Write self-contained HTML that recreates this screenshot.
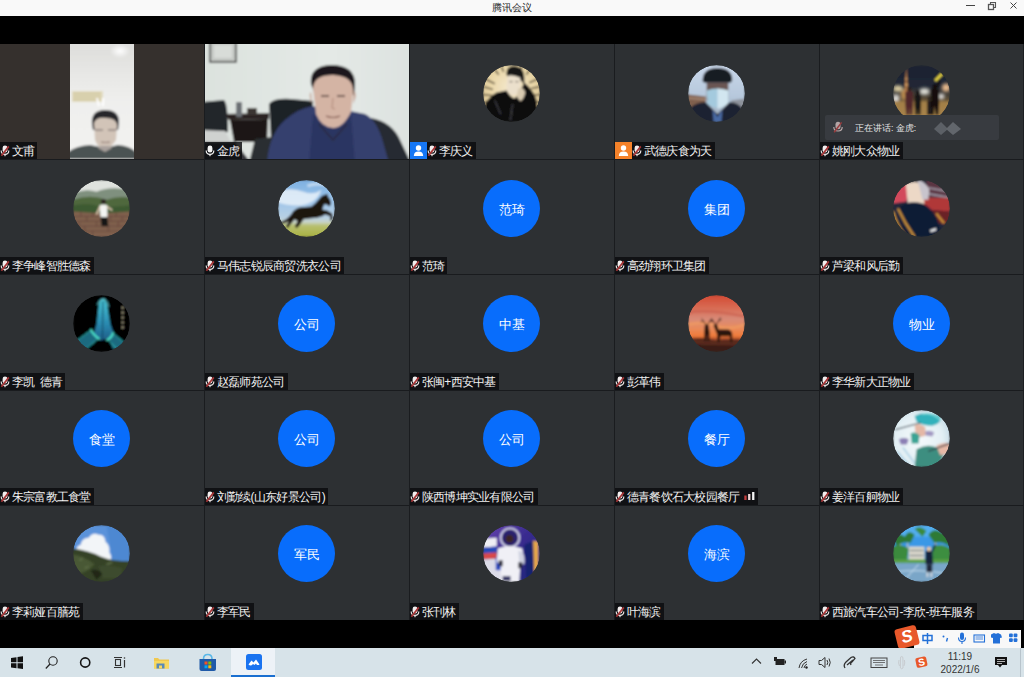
<!DOCTYPE html>
<html><head><meta charset="utf-8">
<style>
*{margin:0;padding:0;box-sizing:border-box}
html,body{width:1024px;height:677px;overflow:hidden;background:#000;font-family:"Liberation Sans",sans-serif}
#title{position:absolute;left:0;top:0;width:1024px;height:16px;background:#f9f9f9}
#title .t{position:absolute;left:0;width:1024px;top:1px;text-align:center;font-size:10px;line-height:13px;color:#2a2a2a}
#grid{position:absolute;left:0;top:44px;width:1024px;height:576px;background:#1a1c1f}
.cell{position:absolute;width:204px;height:115.2px;background:#2d3033;overflow:hidden}
.cell.brown{background:#35302d}
.av{position:absolute;left:73px;top:20.5px;width:57px;height:57px;border-radius:50%;overflow:hidden}
.av svg{display:block;width:57px;height:57px}
.av.blue{background:#086dfc;color:#fff;font-size:13px;text-align:center;line-height:59px}
.label{position:absolute;left:0;bottom:0;height:17px;background:rgba(10,11,13,0.82);color:#f0f0f0;font-size:12px;letter-spacing:-0.7px;line-height:17px;padding:0 3px 0 0;white-space:nowrap;display:flex;align-items:center}
.label .mic{margin-right:1.7px;flex:none;position:relative;top:0.5px}
.label .nm{position:relative;top:1px}
.badge{position:absolute;left:0;bottom:0;width:17px;height:17px}
.badge svg{display:block}
.vid1{position:absolute;left:70px;top:0;width:64px;height:115px;overflow:hidden}
.vid2{position:absolute;left:0;top:0;width:204px;height:115px;overflow:hidden}
#speak{position:absolute;left:825px;top:115px;width:174px;height:25px;background:#383b40;border-radius:2px}
#taskbar{position:absolute;left:0;top:648px;width:1024px;height:29px;background:#d7e3e9}
#speak .st{position:absolute;left:30px;top:0.5px;line-height:25px;font-size:8.6px;color:#e4e4e4;white-space:nowrap}
#ime{position:absolute;left:914px;top:630px;width:107px;height:18px;background:#f8f8f8}
#imelogo{position:absolute;left:-18px;top:-3px;width:22px;height:20px;background:#e8582a;transform:rotate(-14deg);border-radius:3px}
#imelogo span{position:absolute;left:0;top:0;width:22px;text-align:center;font-size:17px;font-weight:bold;color:#fff;line-height:20px;font-style:italic}
#active{position:absolute;left:231px;top:0;width:44px;height:29px;background:#edf2f7;border-bottom:2px solid #1a6fd0}
#clock{position:absolute;left:930px;top:2px;width:60px;text-align:center;font-size:10px;line-height:13px;color:#333}

</style></head><body>
<div id="title"><div class="t">腾讯会议</div>
<svg style="position:absolute;left:960px;top:0" width="64" height="16" viewBox="0 0 64 16">
<path d="M6 5.5 H15" stroke="#444" stroke-width="1"/>
<rect x="28.5" y="4.5" width="5" height="5" fill="none" stroke="#555" stroke-width="1.3"/>
<path d="M30.5 4.5 V2.5 H35.5 V7.5 H33.5" fill="none" stroke="#555" stroke-width="1.1"/>
<path d="M50.5 2.5 L56.5 8.5 M56.5 2.5 L50.5 8.5" stroke="#444" stroke-width="1"/>
</svg>
</div>
<div id="grid">
<div class="cell brown" style="left:0px;top:0.0px;"><div class="vid1"><svg width="64" height="115" viewBox="0 0 64 115">
<defs><linearGradient id="gv1" x1="0" y1="0" x2="0" y2="1"><stop offset="0" stop-color="#dcdcda"/><stop offset="0.3" stop-color="#e8e8e6"/><stop offset="0.5" stop-color="#efefed"/><stop offset="1" stop-color="#f3f3f1"/></linearGradient>
<radialGradient id="glamp" cx="0.5" cy="0.5" r="0.5"><stop offset="0" stop-color="#ffffff"/><stop offset="1" stop-color="#ffffff" stop-opacity="0"/></radialGradient>
<filter id="fv1"><feGaussianBlur stdDeviation="0.8"/></filter></defs>
<g filter="url(#fv1)">
<rect x="-4" y="-4" width="72" height="123" fill="url(#gv1)"/>
<ellipse cx="50" cy="7" rx="10" ry="7" fill="url(#glamp)"/>
<rect x="2" y="47" width="31" height="11" fill="#e2dcc0"/>
<path d="M3 49.5 H31 M3 52.5 H31 M3 55.5 H31" stroke="#c4b47a" stroke-width="1"/>
<path d="M27 54 L29 62 M33 54 L33 62" stroke="#ffffff" stroke-width="2"/>
<path d="M-2 115 L-2 108 Q6 102 20 101 L35 104 L48 101 Q60 102 66 108 L66 115 Z" fill="#4c5252"/>
<path d="M22 80 Q21 66 35 66 Q49 66 49 78 L48 86 L23 86 Z" fill="#26262c"/>
<path d="M24 79 Q26 73 36 74 Q47 74 47 82 L46 96 Q40 105 35 105 Q28 104 25 96 Z" fill="#d2c4b8"/>
<path d="M25 86 H33 M38 86 H46" stroke="#6a6060" stroke-width="1.2"/>
<path d="M31 98 Q35 99 40 98" stroke="#9a8078" stroke-width="1"/>
<path d="M28 104 L35 108 L42 104 L40 102 L30 102 Z" fill="#a8a09c"/>
</g>
</svg></div><div class="label"><svg class="mic" width="10" height="12" viewBox="0 0 10 12"><rect x="2.6" y="0.6" width="4.8" height="7" rx="2.4" fill="#f2eeee"/><path d="M1.2 5.6 Q1.2 9.4 5 9.4 Q8.8 9.4 8.8 5.6" stroke="#e9e4e4" stroke-width="1.2" fill="none"/><rect x="4.4" y="9.2" width="1.2" height="2" fill="#e9e4e4"/><path d="M8.8 1.4 L1.4 10.8" stroke="#a83436" stroke-width="1.7"/></svg><span class="nm">文甫</span></div></div>
<div class="cell" style="left:205px;top:0.0px;"><div class="vid2"><svg width="204" height="115" viewBox="0 0 204 115">
<defs><linearGradient id="gw" x1="0" y1="0" x2="1" y2="0"><stop offset="0" stop-color="#dce2de"/><stop offset="0.6" stop-color="#e4e9e6"/><stop offset="1" stop-color="#dde2e0"/></linearGradient>
<filter id="fv2"><feGaussianBlur stdDeviation="0.8"/></filter></defs>
<g filter="url(#fv2)">
<rect x="-4" y="-4" width="212" height="123" fill="url(#gw)"/>
<rect x="5" y="-2" width="26" height="20" fill="#c4c8c4" stroke="#2e2e2e" stroke-width="1.4"/>
<rect x="9" y="1" width="18" height="13" fill="#d8dcd8"/>
<path d="M-4 58 L19 56 Q23 60 23 88 L-4 90 Z" fill="#22262c"/>
<path d="M20 70 L64 69 L64 75 L24 76 Z" fill="#2a2420"/>
<path d="M25 76 L63 75 L62 98 L29 98 Z" fill="#1c1816"/>
<rect x="31" y="58" width="6" height="15" rx="1" fill="#6c7074"/>
<path d="M42 64 H52 V71 H42 Z" fill="#3a3430"/>
<path d="M-4 86 L20 87 L26 98 L-4 98 Z" fill="#cfd2d0"/>
<path d="M-4 98 L30 98 L46 119 L-4 119 Z" fill="#34363a"/>
<path d="M64 60 Q68 54 86 55 L108 57 L106 90 L66 96 Z" fill="#1e2226"/>
<path d="M50 95 L108 88 L100 119 L44 119 Z" fill="#2a2e32"/>
<path d="M166 74 Q188 78 196 98 L206 119 L166 119 Z" fill="#262a32"/>
<path d="M62 119 Q64 90 80 76 Q94 64 108 62 L118 66 L140 66 L160 70 Q172 76 178 98 L184 119 Z" fill="#353f6e"/>
<path d="M108 70 Q124 86 146 70 L150 119 L104 119 Z" fill="#2c3562"/>
<path d="M114 80 L128 96 L142 80" stroke="#2a2e4a" stroke-width="2" fill="none"/>
<path d="M106 40 Q104 22 126 21 Q150 21 150 40 L149 52 Q142 34 128 33 Q114 34 110 50 Z" fill="#1a181a"/>
<path d="M108 44 Q109 31 128 31 Q149 32 148 48 L146 68 Q138 84 128 84 Q116 83 111 70 Z" fill="#d4b4a4"/>
<path d="M116 52 H124 M132 52 H140" stroke="#54403a" stroke-width="1.5"/>
<path d="M128 54 L127 64 L130 65" stroke="#b08878" stroke-width="1" fill="none"/>
<path d="M121 72 Q128 75 135 72" stroke="#7a5048" stroke-width="1.2" fill="none"/>
<path d="M106 48 Q103 50 107 60 Z M149 46 Q153 50 148 60 Z" fill="#c8a494"/>
</g>
</svg></div><div class="label"><svg class="mic" width="10" height="12" viewBox="0 0 10 12"><rect x="2.6" y="0.6" width="4.8" height="7" rx="2.4" fill="#f4f4f4"/><path d="M1.2 5.6 Q1.2 9.4 5 9.4 Q8.8 9.4 8.8 5.6" stroke="#eeeeee" stroke-width="1.2" fill="none"/><rect x="4.4" y="9.2" width="1.2" height="2" fill="#eeeeee"/></svg><span class="nm">金虎</span></div></div>
<div class="cell" style="left:410px;top:0.0px;"><div class="av"><svg width="58" height="58" viewBox="0 0 58 58"><defs><clipPath id="cli"><circle cx="29" cy="29" r="29"/></clipPath><filter id="fli" x="-10%" y="-10%" width="120%" height="120%"><feGaussianBlur stdDeviation="1"/></filter></defs><g clip-path="url(#cli)"><g filter="url(#fli)">
<defs><radialGradient id="gli" cx="0.5" cy="0.4" r="0.6"><stop offset="0" stop-color="#f6ead0"/><stop offset="0.6" stop-color="#ead8aa"/><stop offset="1" stop-color="#d8c290"/></radialGradient></defs>
<rect width="58" height="58" fill="url(#gli)"/>
<g stroke="#3a3020" stroke-width="1.6" opacity="0.75">
<path d="M2 14 L12 19 M0 22 L10 25 M0 30 L9 31 M1 38 L9 37 M10 2 L16 10 M18 0 L21 7 M40 0 L38 6 M48 4 L44 10 M56 14 L47 18 M58 22 L49 24 M58 30 L49 31 M58 38 L50 37 M56 46 L50 43"/>
</g>
<path d="M24 10 Q23 1 32 1 Q42 2 42 12 L42 20 L39 16 L26 13 Z" fill="#121212"/>
<path d="M25 11 Q30 9 38 13 L38 24 Q35 31 30 31 Q25 29 24 22 Z" fill="#ebe0cc"/>
<path d="M27 17 H30 M33 17 H36" stroke="#5a5048" stroke-width="0.9"/>
<path d="M0 58 L2 40 Q6 32 14 28 L24 26 Q28 33 32 34 L36 30 L42 18 Q50 24 54 34 L58 58 Z" fill="#0d0d10"/>
<path d="M36 24 Q41 22 43 28 Q42 34 38 37 L34 32 Z" fill="#d8cab0"/>
<path d="M12 36 L18 50 M30 40 L28 56" stroke="#6a6a70" stroke-width="1" opacity="0.7"/>
</g></g></svg></div><div class="badge" style="background:#1677f5"><svg width="17" height="17" viewBox="0 0 17 17"><circle cx="8.5" cy="6" r="2.7" fill="#fff"/><path d="M3.8 14 Q4 9.6 8.5 9.6 Q13 9.6 13.2 14 Z" fill="#fff"/></svg></div><div class="label" style="left:17px"><svg class="mic" width="10" height="12" viewBox="0 0 10 12"><rect x="2.6" y="0.6" width="4.8" height="7" rx="2.4" fill="#f2eeee"/><path d="M1.2 5.6 Q1.2 9.4 5 9.4 Q8.8 9.4 8.8 5.6" stroke="#e9e4e4" stroke-width="1.2" fill="none"/><rect x="4.4" y="9.2" width="1.2" height="2" fill="#e9e4e4"/><path d="M8.8 1.4 L1.4 10.8" stroke="#a83436" stroke-width="1.7"/></svg><span class="nm">李庆义</span></div></div>
<div class="cell" style="left:615px;top:0.0px;"><div class="av"><svg width="58" height="58" viewBox="0 0 58 58"><defs><clipPath id="cmask"><circle cx="29" cy="29" r="29"/></clipPath><filter id="fmask" x="-10%" y="-10%" width="120%" height="120%"><feGaussianBlur stdDeviation="1"/></filter></defs><g clip-path="url(#cmask)"><g filter="url(#fmask)">
<defs><linearGradient id="gmask" x1="0" y1="0" x2="0" y2="1"><stop offset="0" stop-color="#cad8ea"/><stop offset="0.55" stop-color="#b6c8dc"/><stop offset="1" stop-color="#9aa8b8"/></linearGradient></defs>
<rect width="58" height="58" fill="url(#gmask)"/>
<path d="M0 30 L18 32 L18 46 L0 46 Z" fill="#80604e"/>
<path d="M0 33.5 L18 35" stroke="#a88a78" stroke-width="1.6"/>
<path d="M44 36 L58 34 L58 44 L44 44 Z" fill="#8e939c"/>
<path d="M15 14 Q16 3 30 3 Q44 3 45 14 Q45 18 42 18 L18 18 Q14 18 15 14 Z" fill="#171a24"/>
<path d="M19 18 L41 18 L41 36 Q30 44 19 36 Z" fill="#6a5652"/>
<path d="M19 26 Q30 22 41 26 L41 40 Q30 47 20 40 Z" fill="#a4cade"/>
<path d="M30 24 L41 26 L41 40 L30 45 Z" fill="#d2e6f0"/>
<path d="M0 58 L2 44 Q8 38 18 38 L30 50 L42 38 Q52 38 56 46 L58 58 Z" fill="#1e2230"/>
<path d="M25 45 L30 53 L35 45 L34 58 L26 58 Z" fill="#4a6aa4"/>
</g></g></svg></div><div class="badge" style="background:#f5822a"><svg width="17" height="17" viewBox="0 0 17 17"><circle cx="8.5" cy="6" r="2.7" fill="#fff"/><path d="M3.8 14 Q4 9.6 8.5 9.6 Q13 9.6 13.2 14 Z" fill="#fff"/></svg></div><div class="label" style="left:17px"><svg class="mic" width="10" height="12" viewBox="0 0 10 12"><rect x="2.6" y="0.6" width="4.8" height="7" rx="2.4" fill="#f2eeee"/><path d="M1.2 5.6 Q1.2 9.4 5 9.4 Q8.8 9.4 8.8 5.6" stroke="#e9e4e4" stroke-width="1.2" fill="none"/><rect x="4.4" y="9.2" width="1.2" height="2" fill="#e9e4e4"/><path d="M8.8 1.4 L1.4 10.8" stroke="#a83436" stroke-width="1.7"/></svg><span class="nm">武德庆食为天</span></div></div>
<div class="cell" style="left:820px;top:0.0px;"><div class="av"><svg width="58" height="58" viewBox="0 0 58 58"><defs><clipPath id="cnight"><circle cx="29" cy="29" r="29"/></clipPath><filter id="fnight" x="-10%" y="-10%" width="120%" height="120%"><feGaussianBlur stdDeviation="1"/></filter></defs><g clip-path="url(#cnight)"><g filter="url(#fnight)">
<defs><linearGradient id="gn" x1="0" y1="0" x2="0" y2="1"><stop offset="0" stop-color="#1a2030"/><stop offset="0.38" stop-color="#222836"/><stop offset="0.55" stop-color="#4a4234"/><stop offset="0.7" stop-color="#8a6a3a"/><stop offset="1" stop-color="#b08848"/></linearGradient>
<filter id="nbl" x="-50%" y="-50%" width="200%" height="200%"><feGaussianBlur stdDeviation="1.4"/></filter></defs>
<rect width="58" height="58" fill="url(#gn)"/>
<g filter="url(#nbl)">
<ellipse cx="5" cy="24" rx="5" ry="3" fill="#e8d8a8"/>
<ellipse cx="3" cy="34" rx="3" ry="4" fill="#e8e8e8"/>
<ellipse cx="32" cy="27" rx="5" ry="3" fill="#e8e8e0"/>
<ellipse cx="54" cy="23" rx="4" ry="4" fill="#f0c090"/>
<ellipse cx="49" cy="32" rx="3" ry="2.5" fill="#f4f4f4"/>
<ellipse cx="13" cy="30" rx="5" ry="6" fill="#c09050"/>
</g>
<path d="M11.5 30 L12.8 10 L13.5 1 L14.2 10 L15.5 30 Z" fill="#b07848"/>
<path d="M12.3 14 L14.7 14 M12 20 L15 20" stroke="#e8b070" stroke-width="1.2"/>
<path d="M42 15 L49 8 L51 10 L44 17 Z" fill="#e6d440"/>
<rect x="0" y="37" width="58" height="21" fill="#a8844a" opacity="0.85"/>
<path d="M12.5 28 Q16.5 24 20.5 28 L20.5 40 L19.5 51 L17 51 L16.5 42 L16 51 L13.5 51 L12.5 40 Z" fill="#50282a"/>
<circle cx="16.5" cy="24.5" r="2.2" fill="#2a1a18"/>
<path d="M22 31 Q25.3 28 28.5 31 L28.5 41 L27.8 51 L25.8 51 L25.3 43 L24.8 51 L22.8 51 L22 41 Z" fill="#141212"/>
<circle cx="25.3" cy="28" r="2.2" fill="#141212"/>
<path d="M34.7 37 Q36.8 34.5 39 37 L39 51 L34.7 51 Z" fill="#201a1a"/>
<circle cx="36.8" cy="34" r="1.6" fill="#201a1a"/>
<path d="M38.5 25 Q42.5 21.5 46.5 25 L47 39 L46 51 L43.5 51 L42.5 41 L41.5 51 L39 51 L38.5 39 Z" fill="#121010"/>
<circle cx="42.5" cy="21.5" r="2.3" fill="#121010"/>
<path d="M45 23 L47.5 15" stroke="#121010" stroke-width="2.2"/>
</g></g></svg></div><div class="label"><svg class="mic" width="10" height="12" viewBox="0 0 10 12"><rect x="2.6" y="0.6" width="4.8" height="7" rx="2.4" fill="#f2eeee"/><path d="M1.2 5.6 Q1.2 9.4 5 9.4 Q8.8 9.4 8.8 5.6" stroke="#e9e4e4" stroke-width="1.2" fill="none"/><rect x="4.4" y="9.2" width="1.2" height="2" fill="#e9e4e4"/><path d="M8.8 1.4 L1.4 10.8" stroke="#a83436" stroke-width="1.7"/></svg><span class="nm">姚刚大众物业</span></div></div>
<div class="cell" style="left:0px;top:115.2px;"><div class="av"><svg width="58" height="58" viewBox="0 0 58 58"><defs><clipPath id="cwall"><circle cx="29" cy="29" r="29"/></clipPath><filter id="fwall" x="-10%" y="-10%" width="120%" height="120%"><feGaussianBlur stdDeviation="1"/></filter></defs><g clip-path="url(#cwall)"><g filter="url(#fwall)">
<rect width="58" height="58" fill="#dfe2de"/>
<path d="M0 14 Q12 8 24 12 Q36 6 58 10 L58 30 L0 30 Z" fill="#7f907e"/>
<path d="M0 20 Q18 14 34 20 Q46 16 58 18 L58 34 L0 34 Z" fill="#50683e"/>
<path d="M0 26 Q16 22 30 28 L58 26 L58 34 L0 34 Z" fill="#3e5a30"/>
<path d="M0 32 L30 34 L58 32 L58 58 L0 58 Z" fill="#80604e"/>
<g stroke="#5c4034" stroke-width="0.8" opacity="0.85">
<path d="M0 37 H58 M0 42 H58 M0 47 H58 M0 52 H58"/>
<path d="M8 32 V37 M20 33 V37 M44 33 V37 M14 37 V42 M38 37 V42 M50 37 V42 M6 42 V47 M24 42 V47 M46 42 V47 M12 47 V52 M36 47 V52 M20 52 V58 M48 52 V58"/>
</g>
<circle cx="31" cy="22" r="2.6" fill="#2e2420"/>
<path d="M27 26 Q31 24 35 26 L35 38 L28 38 Z" fill="#f4f4f2"/>
<path d="M27.5 27 L24 35" stroke="#e8cdb8" stroke-width="1.6"/>
<path d="M34.5 27 L40 31" stroke="#e8cdb8" stroke-width="1.5"/>
<path d="M28 38 L35 38 L36 47 L29 47 Z" fill="#141414"/>
</g></g></svg></div><div class="label"><svg class="mic" width="10" height="12" viewBox="0 0 10 12"><rect x="2.6" y="0.6" width="4.8" height="7" rx="2.4" fill="#f2eeee"/><path d="M1.2 5.6 Q1.2 9.4 5 9.4 Q8.8 9.4 8.8 5.6" stroke="#e9e4e4" stroke-width="1.2" fill="none"/><rect x="4.4" y="9.2" width="1.2" height="2" fill="#e9e4e4"/><path d="M8.8 1.4 L1.4 10.8" stroke="#a83436" stroke-width="1.7"/></svg><span class="nm">李争峰智胜德森</span></div></div>
<div class="cell" style="left:205px;top:115.2px;"><div class="av"><svg width="58" height="58" viewBox="0 0 58 58"><defs><clipPath id="chorse"><circle cx="29" cy="29" r="29"/></clipPath><filter id="fhorse" x="-10%" y="-10%" width="120%" height="120%"><feGaussianBlur stdDeviation="1"/></filter></defs><g clip-path="url(#chorse)"><g filter="url(#fhorse)">
<defs><linearGradient id="gh" x1="0" y1="0" x2="0" y2="1"><stop offset="0" stop-color="#7eb0e0"/><stop offset="0.35" stop-color="#9cc4ea"/><stop offset="0.66" stop-color="#b8d0e4"/><stop offset="0.74" stop-color="#c8d4c8"/><stop offset="0.8" stop-color="#b8c070"/><stop offset="1" stop-color="#a8b040"/></linearGradient></defs>
<rect width="58" height="58" fill="url(#gh)"/>
<path d="M-2 14 Q10 6 26 12 Q36 16 44 10 Q40 24 22 26 Q6 26 -2 22 Z" fill="#eef4fa" opacity="0.8"/>
<path d="M30 6 Q40 2 52 6" stroke="#e8f0f8" stroke-width="3" opacity="0.6" fill="none"/>
<path d="M2 43 Q10 40 14 34 Q16 30 22 28 L34 27 Q38 24 42 19 Q45 15 48 15 L50 14 L51 17 Q54 20 54 25 L52 27 Q49 24 47 25 L45 30 L50 31 L55 34 L56 40 L53 42 L53 37 L48 35 L45 37 Q40 39 34 39 L26 40 L22 46 L19 49 L17 47 L20 42 L17 40 L12 46 L10 49 L8 47 L11 42 Q8 44 2 45 Z" fill="#1c1210"/>
</g></g></svg></div><div class="label"><svg class="mic" width="10" height="12" viewBox="0 0 10 12"><rect x="2.6" y="0.6" width="4.8" height="7" rx="2.4" fill="#f2eeee"/><path d="M1.2 5.6 Q1.2 9.4 5 9.4 Q8.8 9.4 8.8 5.6" stroke="#e9e4e4" stroke-width="1.2" fill="none"/><rect x="4.4" y="9.2" width="1.2" height="2" fill="#e9e4e4"/><path d="M8.8 1.4 L1.4 10.8" stroke="#a83436" stroke-width="1.7"/></svg><span class="nm">马伟志锐辰商贸洗衣公司</span></div></div>
<div class="cell" style="left:410px;top:115.2px;"><div class="av blue"><span>范琦</span></div><div class="label"><svg class="mic" width="10" height="12" viewBox="0 0 10 12"><rect x="2.6" y="0.6" width="4.8" height="7" rx="2.4" fill="#f2eeee"/><path d="M1.2 5.6 Q1.2 9.4 5 9.4 Q8.8 9.4 8.8 5.6" stroke="#e9e4e4" stroke-width="1.2" fill="none"/><rect x="4.4" y="9.2" width="1.2" height="2" fill="#e9e4e4"/><path d="M8.8 1.4 L1.4 10.8" stroke="#a83436" stroke-width="1.7"/></svg><span class="nm">范琦</span></div></div>
<div class="cell" style="left:615px;top:115.2px;"><div class="av blue"><span>集团</span></div><div class="label"><svg class="mic" width="10" height="12" viewBox="0 0 10 12"><rect x="2.6" y="0.6" width="4.8" height="7" rx="2.4" fill="#f2eeee"/><path d="M1.2 5.6 Q1.2 9.4 5 9.4 Q8.8 9.4 8.8 5.6" stroke="#e9e4e4" stroke-width="1.2" fill="none"/><rect x="4.4" y="9.2" width="1.2" height="2" fill="#e9e4e4"/><path d="M8.8 1.4 L1.4 10.8" stroke="#a83436" stroke-width="1.7"/></svg><span class="nm">高劲翔环卫集团</span></div></div>
<div class="cell" style="left:820px;top:115.2px;"><div class="av"><svg width="58" height="58" viewBox="0 0 58 58"><defs><clipPath id="ccar"><circle cx="29" cy="29" r="29"/></clipPath><filter id="fcar" x="-10%" y="-10%" width="120%" height="120%"><feGaussianBlur stdDeviation="1"/></filter></defs><g clip-path="url(#ccar)"><g filter="url(#fcar)">
<rect width="58" height="58" fill="#24283a"/>
<path d="M0 2 L16 2 L14 22 L0 24 Z" fill="#d24a5c"/>
<path d="M34 0 L58 0 L58 20 L34 20 Z" fill="#5a3442"/>
<path d="M36 8 L58 12 M36 14 L58 18" stroke="#a8a8b4" stroke-width="2" opacity="0.8"/>
<path d="M30 18 L58 18 L58 32 L30 30 Z" fill="#b03838"/>
<path d="M34 30 L58 32 L58 46 L36 42 Z" fill="#6a2428"/>
<path d="M13 4 Q22 0 30 4 L32 24 Q24 30 15 24 Z" fill="#ecd8c6"/>
<path d="M25 0 Q34 2 37 10 L36 20 L30 20 Z" fill="#c8c4cc"/>
<path d="M6 28 Q16 20 30 24 Q44 30 48 50 L44 58 L12 58 Z" fill="#101a34"/>
<path d="M0 32 Q4 46 12 56 M5 29 Q12 44 22 58 M44 34 L52 44" stroke="#cc9238" stroke-width="2.2"/>
<path d="M38 52 L44 50" stroke="#f0f0f0" stroke-width="2.2"/>
</g></g></svg></div><div class="label"><svg class="mic" width="10" height="12" viewBox="0 0 10 12"><rect x="2.6" y="0.6" width="4.8" height="7" rx="2.4" fill="#f2eeee"/><path d="M1.2 5.6 Q1.2 9.4 5 9.4 Q8.8 9.4 8.8 5.6" stroke="#e9e4e4" stroke-width="1.2" fill="none"/><rect x="4.4" y="9.2" width="1.2" height="2" fill="#e9e4e4"/><path d="M8.8 1.4 L1.4 10.8" stroke="#a83436" stroke-width="1.7"/></svg><span class="nm">芦梁和风后勤</span></div></div>
<div class="cell" style="left:0px;top:230.4px;"><div class="av"><svg width="58" height="58" viewBox="0 0 58 58"><defs><clipPath id="chands"><circle cx="29" cy="29" r="29"/></clipPath><filter id="fhands" x="-10%" y="-10%" width="120%" height="120%"><feGaussianBlur stdDeviation="1"/></filter></defs><g clip-path="url(#chands)"><g filter="url(#fhands)">
<rect width="58" height="58" fill="#030506"/>
<defs><linearGradient id="ghd" x1="0" y1="0" x2="0" y2="1"><stop offset="0" stop-color="#48c8d8"/><stop offset="0.6" stop-color="#2a8ab0"/><stop offset="1" stop-color="#1e5e88"/></linearGradient></defs>
<path d="M2 48 L18 36 L24 40 L26 44 L12 56 L6 58 Z" fill="#1a6a80"/>
<path d="M2 48 L18 36 M12 56 L26 44" stroke="#3ad0c8" stroke-width="1" opacity="0.8"/>
<path d="M36 42 L42 40 L54 50 L48 58 L40 54 Z" fill="#1a6a80"/>
<path d="M42 40 L54 50 M36 46 L46 56" stroke="#3ad0c8" stroke-width="1" opacity="0.8"/>
<path d="M30.5 4 Q34 5 35 12 L38 30 L41 38 L36 44 L28 46 L21 40 L24 30 L26 12 Q27 5 30.5 4 Z" fill="url(#ghd)"/>
<path d="M30.5 6 L30 44" stroke="#0e3a54" stroke-width="0.9"/>
<path d="M25 10 Q27 4 31 4 Q35 5 36 12" stroke="#70e4f0" stroke-width="1" fill="none"/>
<path d="M18 35 Q21 41 27 45" stroke="#50e8d0" stroke-width="2" fill="none"/>
<path d="M41 38 Q39 44 34 46" stroke="#50e8d0" stroke-width="2" fill="none"/>
<g fill="#c0b898"><circle cx="50.5" cy="13" r="1.1"/><circle cx="50.5" cy="18" r="1.1"/><circle cx="50.5" cy="23" r="1.1"/><circle cx="50.5" cy="28" r="1.1"/><circle cx="50.5" cy="33" r="1.1"/></g>
</g></g></svg></div><div class="label"><svg class="mic" width="10" height="12" viewBox="0 0 10 12"><rect x="2.6" y="0.6" width="4.8" height="7" rx="2.4" fill="#f2eeee"/><path d="M1.2 5.6 Q1.2 9.4 5 9.4 Q8.8 9.4 8.8 5.6" stroke="#e9e4e4" stroke-width="1.2" fill="none"/><rect x="4.4" y="9.2" width="1.2" height="2" fill="#e9e4e4"/><path d="M8.8 1.4 L1.4 10.8" stroke="#a83436" stroke-width="1.7"/></svg><span class="nm">李凯&nbsp;&nbsp;德青</span></div></div>
<div class="cell" style="left:205px;top:230.4px;"><div class="av blue"><span>公司</span></div><div class="label"><svg class="mic" width="10" height="12" viewBox="0 0 10 12"><rect x="2.6" y="0.6" width="4.8" height="7" rx="2.4" fill="#f2eeee"/><path d="M1.2 5.6 Q1.2 9.4 5 9.4 Q8.8 9.4 8.8 5.6" stroke="#e9e4e4" stroke-width="1.2" fill="none"/><rect x="4.4" y="9.2" width="1.2" height="2" fill="#e9e4e4"/><path d="M8.8 1.4 L1.4 10.8" stroke="#a83436" stroke-width="1.7"/></svg><span class="nm">赵磊师苑公司</span></div></div>
<div class="cell" style="left:410px;top:230.4px;"><div class="av blue"><span>中基</span></div><div class="label"><svg class="mic" width="10" height="12" viewBox="0 0 10 12"><rect x="2.6" y="0.6" width="4.8" height="7" rx="2.4" fill="#f2eeee"/><path d="M1.2 5.6 Q1.2 9.4 5 9.4 Q8.8 9.4 8.8 5.6" stroke="#e9e4e4" stroke-width="1.2" fill="none"/><rect x="4.4" y="9.2" width="1.2" height="2" fill="#e9e4e4"/><path d="M8.8 1.4 L1.4 10.8" stroke="#a83436" stroke-width="1.7"/></svg><span class="nm">张闽+西安中基</span></div></div>
<div class="cell" style="left:615px;top:230.4px;"><div class="av"><svg width="58" height="58" viewBox="0 0 58 58"><defs><clipPath id="cdeer"><circle cx="29" cy="29" r="29"/></clipPath><filter id="fdeer" x="-10%" y="-10%" width="120%" height="120%"><feGaussianBlur stdDeviation="1"/></filter></defs><g clip-path="url(#cdeer)"><g filter="url(#fdeer)">
<defs><linearGradient id="gd" x1="0" y1="0" x2="0" y2="1"><stop offset="0" stop-color="#d24a34"/><stop offset="0.22" stop-color="#d86a52"/><stop offset="0.42" stop-color="#d88a78"/><stop offset="0.6" stop-color="#ea8a58"/><stop offset="0.72" stop-color="#f07a3a"/><stop offset="0.8" stop-color="#8a3a24"/><stop offset="1" stop-color="#4a2218"/></linearGradient></defs>
<rect width="58" height="58" fill="url(#gd)"/>
<path d="M0 30 Q16 26 30 32 Q44 36 58 30" stroke="#f4a060" stroke-width="3" opacity="0.6" fill="none"/>
<path d="M0 18 Q20 14 58 22" stroke="#c85848" stroke-width="2.5" opacity="0.6" fill="none"/>
<path d="M0 45 Q14 42 28 46 Q44 44 58 46 L58 58 L0 58 Z" fill="#5a2a1e"/>
<path d="M0 50 L58 52 L58 58 L0 58 Z" fill="#3a1c16"/>
<path d="M17 31 Q19 28 21 31 L22 38 L22 47 L20 47 L19.5 40 L18.5 47 L16.5 47 L16.5 38 Z" fill="#2c1410"/>
<path d="M14 24 L18 30 M15 27 L13 27 M24 24 L20 30 M23 27 L25 27" stroke="#2c1410" stroke-width="0.9"/>
<path d="M26 31 Q28 28 30 31 L31 35 L41 35 Q45 36 45 40 L45 48 L43 48 L42.5 42 L33 42 L32 48 L30 48 L29.5 40 Z" fill="#2c1410"/>
<path d="M24 24 L28 30 M33 23 L29 30 M25 27 L23 26 M32 26 L34 25" stroke="#2c1410" stroke-width="0.9"/>
</g></g></svg></div><div class="label"><svg class="mic" width="10" height="12" viewBox="0 0 10 12"><rect x="2.6" y="0.6" width="4.8" height="7" rx="2.4" fill="#f2eeee"/><path d="M1.2 5.6 Q1.2 9.4 5 9.4 Q8.8 9.4 8.8 5.6" stroke="#e9e4e4" stroke-width="1.2" fill="none"/><rect x="4.4" y="9.2" width="1.2" height="2" fill="#e9e4e4"/><path d="M8.8 1.4 L1.4 10.8" stroke="#a83436" stroke-width="1.7"/></svg><span class="nm">彭革伟</span></div></div>
<div class="cell" style="left:820px;top:230.4px;"><div class="av blue"><span>物业</span></div><div class="label"><svg class="mic" width="10" height="12" viewBox="0 0 10 12"><rect x="2.6" y="0.6" width="4.8" height="7" rx="2.4" fill="#f2eeee"/><path d="M1.2 5.6 Q1.2 9.4 5 9.4 Q8.8 9.4 8.8 5.6" stroke="#e9e4e4" stroke-width="1.2" fill="none"/><rect x="4.4" y="9.2" width="1.2" height="2" fill="#e9e4e4"/><path d="M8.8 1.4 L1.4 10.8" stroke="#a83436" stroke-width="1.7"/></svg><span class="nm">李华新大正物业</span></div></div>
<div class="cell" style="left:0px;top:345.6px;"><div class="av blue"><span>食堂</span></div><div class="label"><svg class="mic" width="10" height="12" viewBox="0 0 10 12"><rect x="2.6" y="0.6" width="4.8" height="7" rx="2.4" fill="#f2eeee"/><path d="M1.2 5.6 Q1.2 9.4 5 9.4 Q8.8 9.4 8.8 5.6" stroke="#e9e4e4" stroke-width="1.2" fill="none"/><rect x="4.4" y="9.2" width="1.2" height="2" fill="#e9e4e4"/><path d="M8.8 1.4 L1.4 10.8" stroke="#a83436" stroke-width="1.7"/></svg><span class="nm">朱宗富教工食堂</span></div></div>
<div class="cell" style="left:205px;top:345.6px;"><div class="av blue"><span>公司</span></div><div class="label"><svg class="mic" width="10" height="12" viewBox="0 0 10 12"><rect x="2.6" y="0.6" width="4.8" height="7" rx="2.4" fill="#f2eeee"/><path d="M1.2 5.6 Q1.2 9.4 5 9.4 Q8.8 9.4 8.8 5.6" stroke="#e9e4e4" stroke-width="1.2" fill="none"/><rect x="4.4" y="9.2" width="1.2" height="2" fill="#e9e4e4"/><path d="M8.8 1.4 L1.4 10.8" stroke="#a83436" stroke-width="1.7"/></svg><span class="nm">刘勤续(山东好景公司)</span></div></div>
<div class="cell" style="left:410px;top:345.6px;"><div class="av blue"><span>公司</span></div><div class="label"><svg class="mic" width="10" height="12" viewBox="0 0 10 12"><rect x="2.6" y="0.6" width="4.8" height="7" rx="2.4" fill="#f2eeee"/><path d="M1.2 5.6 Q1.2 9.4 5 9.4 Q8.8 9.4 8.8 5.6" stroke="#e9e4e4" stroke-width="1.2" fill="none"/><rect x="4.4" y="9.2" width="1.2" height="2" fill="#e9e4e4"/><path d="M8.8 1.4 L1.4 10.8" stroke="#a83436" stroke-width="1.7"/></svg><span class="nm">陕西博坤实业有限公司</span></div></div>
<div class="cell" style="left:615px;top:345.6px;"><div class="av blue"><span>餐厅</span></div><div class="label"><svg class="mic" width="10" height="12" viewBox="0 0 10 12"><rect x="2.6" y="0.6" width="4.8" height="7" rx="2.4" fill="#f2eeee"/><path d="M1.2 5.6 Q1.2 9.4 5 9.4 Q8.8 9.4 8.8 5.6" stroke="#e9e4e4" stroke-width="1.2" fill="none"/><rect x="4.4" y="9.2" width="1.2" height="2" fill="#e9e4e4"/><path d="M8.8 1.4 L1.4 10.8" stroke="#a83436" stroke-width="1.7"/></svg><span class="nm">德青餐饮石大校园餐厅</span><svg width="11" height="10" viewBox="0 0 11 10" style="margin-left:4px;flex:none"><rect x="0.3" y="4.5" width="2.3" height="4.5" fill="#c03a3a"/><rect x="4.1" y="3" width="2.3" height="6" fill="#f0d8d8"/><rect x="8.1" y="1" width="2.3" height="8" fill="#f2f2f2"/></svg></div></div>
<div class="cell" style="left:820px;top:345.6px;"><div class="av"><svg width="58" height="58" viewBox="0 0 58 58"><defs><clipPath id="canime"><circle cx="29" cy="29" r="29"/></clipPath><filter id="fanime" x="-10%" y="-10%" width="120%" height="120%"><feGaussianBlur stdDeviation="1"/></filter></defs><g clip-path="url(#canime)"><g filter="url(#fanime)">
<defs><radialGradient id="gan" cx="0.45" cy="0.5" r="0.6"><stop offset="0" stop-color="#f6fafc"/><stop offset="0.7" stop-color="#e2eff4"/><stop offset="1" stop-color="#c0d6e2"/></radialGradient></defs>
<rect width="58" height="58" fill="url(#gan)"/>
<path d="M22 6 Q32 0 48 6 Q50 14 40 16 Q30 16 24 12 Z" fill="#30b2bc"/>
<path d="M30 4 Q40 2 48 10" stroke="#80dcdc" stroke-width="1.5" fill="none"/>
<path d="M2 20 L28 13" stroke="#34404c" stroke-width="1.1"/>
<path d="M6 30 Q11 27 16 30 L14 35 L8 35 Z" fill="#7a6aa8" opacity="0.85"/>
<path d="M32 22 Q38 20 42 23 L40 27 L33 26 Z" fill="#8a7ab0" opacity="0.75"/>
<path d="M22 15 Q29 13 33 18 L33 26 Q28 29 23 26 Z" fill="#e4b8a6"/>
<path d="M18 24 Q23 21 27 26 L26 34 L19 34 Z" fill="#3aa494"/>
<path d="M22 58 L24 40 Q34 34 44 38 L52 44 Q48 56 44 58 Z" fill="#3e8e80"/>
<path d="M44 36 Q52 32 58 34 L58 44 L48 46 Z" fill="#e6b8a6"/>
<path d="M36 42 L58 34" stroke="#2a303c" stroke-width="1.2"/>
<path d="M4 42 L16 56 M10 38 L22 54" stroke="#a4cce2" stroke-width="1.5"/>
</g></g></svg></div><div class="label"><svg class="mic" width="10" height="12" viewBox="0 0 10 12"><rect x="2.6" y="0.6" width="4.8" height="7" rx="2.4" fill="#f2eeee"/><path d="M1.2 5.6 Q1.2 9.4 5 9.4 Q8.8 9.4 8.8 5.6" stroke="#e9e4e4" stroke-width="1.2" fill="none"/><rect x="4.4" y="9.2" width="1.2" height="2" fill="#e9e4e4"/><path d="M8.8 1.4 L1.4 10.8" stroke="#a83436" stroke-width="1.7"/></svg><span class="nm">姜洋百舸物业</span></div></div>
<div class="cell" style="left:0px;top:460.8px;"><div class="av"><svg width="58" height="58" viewBox="0 0 58 58"><defs><clipPath id="csky"><circle cx="29" cy="29" r="29"/></clipPath><filter id="fsky" x="-10%" y="-10%" width="120%" height="120%"><feGaussianBlur stdDeviation="1"/></filter></defs><g clip-path="url(#csky)"><g filter="url(#fsky)">
<rect width="58" height="58" fill="#5a92da"/>
<path d="M34 0 L58 0 L58 40 L40 36 Z" fill="#4e88d2"/>
<path d="M3 28 Q3 21 8 20 Q9 13 16 13 Q20 7 26 10 Q32 9 33 17 Q38 21 37 28 Q40 32 38 36 L0 28 Z" fill="#f2f5f8"/>
<path d="M0 24 Q16 26 28 32 Q40 37 58 37 L58 58 L0 58 Z" fill="#364228"/>
<path d="M0 30 Q12 32 22 40 Q14 50 0 50 Z" fill="#485834"/>
<path d="M26 42 Q38 40 50 44 L48 54 L30 54 Z" fill="#3e4c2e"/>
<path d="M18 46 Q26 44 30 50 L24 56 Z" fill="#202818"/>
<path d="M6 36 L10 34 M34 40 L40 38 M12 44 L16 42" stroke="#5a6a44" stroke-width="2"/>
</g></g></svg></div><div class="label"><svg class="mic" width="10" height="12" viewBox="0 0 10 12"><rect x="2.6" y="0.6" width="4.8" height="7" rx="2.4" fill="#f2eeee"/><path d="M1.2 5.6 Q1.2 9.4 5 9.4 Q8.8 9.4 8.8 5.6" stroke="#e9e4e4" stroke-width="1.2" fill="none"/><rect x="4.4" y="9.2" width="1.2" height="2" fill="#e9e4e4"/><path d="M8.8 1.4 L1.4 10.8" stroke="#a83436" stroke-width="1.7"/></svg><span class="nm">李莉娅百膳苑</span></div></div>
<div class="cell" style="left:205px;top:460.8px;"><div class="av blue"><span>军民</span></div><div class="label"><svg class="mic" width="10" height="12" viewBox="0 0 10 12"><rect x="2.6" y="0.6" width="4.8" height="7" rx="2.4" fill="#f2eeee"/><path d="M1.2 5.6 Q1.2 9.4 5 9.4 Q8.8 9.4 8.8 5.6" stroke="#e9e4e4" stroke-width="1.2" fill="none"/><rect x="4.4" y="9.2" width="1.2" height="2" fill="#e9e4e4"/><path d="M8.8 1.4 L1.4 10.8" stroke="#a83436" stroke-width="1.7"/></svg><span class="nm">李军民</span></div></div>
<div class="cell" style="left:410px;top:460.8px;"><div class="av"><svg width="58" height="58" viewBox="0 0 58 58"><defs><clipPath id="castro"><circle cx="29" cy="29" r="29"/></clipPath><filter id="fastro" x="-10%" y="-10%" width="120%" height="120%"><feGaussianBlur stdDeviation="1"/></filter></defs><g clip-path="url(#castro)"><g filter="url(#fastro)">
<defs><linearGradient id="ga" x1="0" y1="0" x2="1" y2="1"><stop offset="0" stop-color="#6a44b0"/><stop offset="0.45" stop-color="#3a2c90"/><stop offset="1" stop-color="#1c2278"/></linearGradient></defs>
<rect width="58" height="58" fill="url(#ga)"/>
<path d="M0 14 L14 13 L14 22 L0 23 Z" fill="#eeeef4"/>
<path d="M0 23 L14 22 L14 28 L0 29 Z" fill="#2848b8"/>
<path d="M0 29 L14 28 L14 34 L0 35 Z" fill="#d84a4a"/>
<path d="M0 35 L18 34 L20 58 L0 58 Z" fill="#dcdce8"/>
<path d="M13 33 L20 33 L20 46 L13 46 Z" fill="#2a48c0"/>
<path d="M42 20 L52 16 L54 50 L44 54 Z" fill="#182070"/>
<path d="M51 16 L56 17 L56 46 L52 48 Z" fill="#e8a84a"/>
<circle cx="27.5" cy="13" r="9.5" fill="#2a2070" stroke="#dcdcf0" stroke-width="1.8"/>
<circle cx="27" cy="14" r="4" fill="#3a2828"/>
<path d="M15 24 Q27 19 40 24 L42 38 L38 40 L37 58 L18 58 L18 40 L14 38 Z" fill="#f0f0f6"/>
<path d="M36 26 Q44 28 42 40 L37 40 Z" fill="#cfd2e0"/>
<path d="M16 36 L20 36 L20 42 L16 42 Z" fill="#2a2a3a"/>
<path d="M36 38 L40 38 L40 44 L36 44 Z" fill="#2a2a3a"/>
<path d="M20 52 L28 52 L28 57 L20 57 Z" fill="#3a3a68"/>
</g></g></svg></div><div class="label"><svg class="mic" width="10" height="12" viewBox="0 0 10 12"><rect x="2.6" y="0.6" width="4.8" height="7" rx="2.4" fill="#f2eeee"/><path d="M1.2 5.6 Q1.2 9.4 5 9.4 Q8.8 9.4 8.8 5.6" stroke="#e9e4e4" stroke-width="1.2" fill="none"/><rect x="4.4" y="9.2" width="1.2" height="2" fill="#e9e4e4"/><path d="M8.8 1.4 L1.4 10.8" stroke="#a83436" stroke-width="1.7"/></svg><span class="nm">张刊林</span></div></div>
<div class="cell" style="left:615px;top:460.8px;"><div class="av blue"><span>海滨</span></div><div class="label"><svg class="mic" width="10" height="12" viewBox="0 0 10 12"><rect x="2.6" y="0.6" width="4.8" height="7" rx="2.4" fill="#f2eeee"/><path d="M1.2 5.6 Q1.2 9.4 5 9.4 Q8.8 9.4 8.8 5.6" stroke="#e9e4e4" stroke-width="1.2" fill="none"/><rect x="4.4" y="9.2" width="1.2" height="2" fill="#e9e4e4"/><path d="M8.8 1.4 L1.4 10.8" stroke="#a83436" stroke-width="1.7"/></svg><span class="nm">叶海滨</span></div></div>
<div class="cell" style="left:820px;top:460.8px;"><div class="av"><svg width="58" height="58" viewBox="0 0 58 58"><defs><clipPath id="cpalm"><circle cx="29" cy="29" r="29"/></clipPath><filter id="fpalm" x="-10%" y="-10%" width="120%" height="120%"><feGaussianBlur stdDeviation="1"/></filter></defs><g clip-path="url(#cpalm)"><g filter="url(#fpalm)">
<rect width="58" height="58" fill="#3a98e6"/>
<path d="M0 0 L58 0 L58 12 L0 12 Z" fill="#52aef0"/>
<path d="M6 40 L8 12 M14 40 L15 18 M44 40 L43 14 M52 40 L50 20" stroke="#c8c4b0" stroke-width="1.1"/>
<path d="M0 14 Q6 6 12 12 Q16 4 22 10 L18 18 Q10 16 4 22 Z" fill="#2e7a34"/>
<path d="M0 22 Q8 18 16 24 L14 38 L0 38 Z" fill="#3a8a3c"/>
<path d="M36 10 Q42 2 50 8 Q56 6 58 12 L58 22 Q50 16 42 18 Z" fill="#2e7a34"/>
<path d="M40 22 Q50 18 58 24 L58 38 L40 38 Z" fill="#3e8e40"/>
<path d="M22 4 Q28 0 34 6 L30 12 Z" fill="#3a8a3a"/>
<path d="M16 22 L32 22 L32 36 L16 36 Z" fill="#dcd8cc"/>
<path d="M17 26 H31 M17 31 H31" stroke="#8a9494" stroke-width="1.5"/>
<path d="M0 35 L58 35 L58 39 L0 39 Z" fill="#5aa046"/>
<path d="M0 39 L58 39 L58 58 L0 58 Z" fill="#7aa6c8"/>
<path d="M0 48 Q24 44 58 50 M10 58 L26 40" stroke="#c4dcee" stroke-width="1" fill="none"/>
<path d="M33 27 Q36.5 24 40 27 L41 40 L33 40 Z" fill="#18203a"/>
<path d="M34 40 L40 40 L40 48 L34 48 Z" fill="#22283a"/>
<path d="M35 48 L35 53 M39 48 L39 53" stroke="#e0e0e0" stroke-width="1.5"/>
<circle cx="36.5" cy="24.5" r="2.3" fill="#e8c8a0"/>
<path d="M40 27 L43 20" stroke="#18203a" stroke-width="1.6"/>
</g></g></svg></div><div class="label"><svg class="mic" width="10" height="12" viewBox="0 0 10 12"><rect x="2.6" y="0.6" width="4.8" height="7" rx="2.4" fill="#f2eeee"/><path d="M1.2 5.6 Q1.2 9.4 5 9.4 Q8.8 9.4 8.8 5.6" stroke="#e9e4e4" stroke-width="1.2" fill="none"/><rect x="4.4" y="9.2" width="1.2" height="2" fill="#e9e4e4"/><path d="M8.8 1.4 L1.4 10.8" stroke="#a83436" stroke-width="1.7"/></svg><span class="nm">西旅汽车公司-李欣-班车服务</span></div></div>
<div style="position:absolute;left:1023px;top:0;width:1px;height:576px;background:#1c1e21"></div><div style="position:absolute;left:0;top:115.2px;width:1024px;height:1px;background:#191b1e"></div><div style="position:absolute;left:0;top:230.4px;width:1024px;height:1px;background:#191b1e"></div><div style="position:absolute;left:0;top:345.6px;width:1024px;height:1px;background:#191b1e"></div><div style="position:absolute;left:0;top:460.8px;width:1024px;height:1px;background:#191b1e"></div>
</div>
<div id="speak">
<svg style="position:absolute;left:7px;top:6px" width="12" height="13" viewBox="0 0 12 13"><rect x="3.5" y="0.8" width="5" height="7.4" rx="2.5" fill="#c9b8b8" opacity="0.85"/><path d="M1.8 6 Q1.8 10 6 10 Q10.2 10 10.2 6" stroke="#bfaeae" stroke-width="1.1" fill="none"/><path d="M9.6 1.4 L2.2 11.2" stroke="#9a3a3c" stroke-width="1.5"/></svg>
<div class="st">正在讲话: 金虎:</div>
<svg style="position:absolute;left:106px;top:5px" width="34" height="16" viewBox="0 0 34 16"><g filter="url(#lb)"><path d="M10 2 L17 9 L10 15 L3 9 Z" fill="#5c6066"/><path d="M22 2 L30 9 L22 15 L15 9 Z" fill="#62666c"/></g><defs><filter id="lb"><feGaussianBlur stdDeviation="0.6"/></filter></defs></svg>
</div>
<div id="ime">
<div id="imelogo"><span>S</span></div>
<svg style="position:absolute;left:0;top:0" width="107" height="18" viewBox="0 0 107 18">
<g fill="none" stroke="#2370d8" stroke-width="1.5">
<rect x="9" y="5.5" width="9" height="5"/><path d="M13.5 3 V14"/>
</g>
<circle cx="29.5" cy="6.5" r="1" fill="#2370d8"/><path d="M33.5 8 L32.5 11.5" stroke="#2370d8" stroke-width="1.4"/>
<rect x="46" y="2.5" width="4" height="7.5" rx="2" fill="#2370d8"/><path d="M44.5 7.5 Q44.5 11.5 48 11.5 Q51.5 11.5 51.5 7.5 M48 11.5 V14" stroke="#2370d8" stroke-width="1.1" fill="none"/>
<rect x="60" y="5" width="10.5" height="7" fill="none" stroke="#2370d8" stroke-width="1.1"/><path d="M61.5 7 H69 M61.5 9 H69" stroke="#2370d8" stroke-width="0.8"/>
<path d="M77 4.5 L80 3 Q82 4.5 84 3 L87 4.5 L88 7.5 L86 8 L86 13.5 L79 13.5 L79 8 L77 7.5 Z" fill="#2370d8"/>
<rect x="95" y="3.5" width="3.8" height="3.8" rx="1" fill="#2370d8"/><rect x="99.6" y="3.5" width="3.8" height="3.8" rx="1" fill="#2370d8"/><rect x="95" y="8.3" width="3.8" height="3.8" rx="1" fill="#2370d8"/><rect x="99.6" y="8.3" width="3.8" height="3.8" rx="1" fill="#2370d8"/>
</svg>
</div>
<div id="taskbar">
<svg style="position:absolute;left:0;top:0" width="300" height="29" viewBox="0 0 300 29">
<path d="M11 10 L16.5 9.2 V14.2 H11 Z M17.5 9 L23 8.2 V14.2 H17.5 Z M11 15.2 H16.5 V20.2 L11 19.4 Z M17.5 15.2 H23 V21 L17.5 20.2 Z" fill="#111"/>
<circle cx="53" cy="13" r="4.2" fill="none" stroke="#222" stroke-width="1.1"/><path d="M50 16 L45.8 20.5" stroke="#222" stroke-width="1.2"/>
<circle cx="85.2" cy="14.5" r="4.6" fill="none" stroke="#151515" stroke-width="1.6"/>
<path d="M114 9.5 H122 M114 19.5 H122" stroke="#333" stroke-width="1.2"/><rect x="115.5" y="11.5" width="5" height="6" fill="none" stroke="#333" stroke-width="1.1"/><circle cx="124.5" cy="10" r="0.8" fill="#333"/><path d="M124.5 12 V19.5" stroke="#333" stroke-width="1.2"/>
<path d="M154 10 L158 10 L159.5 11.5 L169 11.5 L169 20.5 L154 20.5 Z" fill="#f0c850"/>
<path d="M154 13 L169 13 L169 20.5 L154 20.5 Z" fill="#f8d860"/>
<rect x="156.5" y="15.5" width="8" height="5" fill="#5a8ab8"/><rect x="159" y="17.5" width="3" height="3" fill="#f8d860"/>
<path d="M199.5 11 H216 V21 Q216 23 214 23 H201.5 Q199.5 23 199.5 21 Z" fill="#1f5aa8"/>
<path d="M203.5 11 Q203.5 6.5 207.8 6.5 Q212 6.5 212 11" stroke="#5ab8e8" stroke-width="1.6" fill="none"/>
<rect x="204.5" y="13.5" width="3" height="3" fill="#f35325"/><rect x="208.3" y="13.5" width="3" height="3" fill="#81bc06"/><rect x="204.5" y="17.3" width="3" height="3" fill="#05a6f0"/><rect x="208.3" y="17.3" width="3" height="3" fill="#ffba08"/>
</svg>
<div id="active"></div>
<svg style="position:absolute;left:246px;top:6px" width="16" height="16" viewBox="0 0 16 16"><rect width="16" height="16" rx="2.5" fill="#1a73f0"/><path d="M2.5 10.5 L5.5 6.5 L7.5 8.5 L10 5.5 L13.5 10.5 Q12 11.5 10.5 10.5 L10 9.5 L8.5 11 L7 10 Q6 11.5 4 11.5 Z" fill="#fff"/></svg>
<svg style="position:absolute;left:740px;top:0" width="160" height="29" viewBox="0 0 160 29">
<path d="M12 15.5 L16.5 11 L21 15.5" stroke="#333" stroke-width="1.1" fill="none"/>
<rect x="35.5" y="11" width="9" height="6" fill="#222"/><rect x="34" y="9" width="3" height="4" fill="#222"/><rect x="44.5" y="12.5" width="1.5" height="3" fill="#222"/>
<path d="M59 20 Q60 13 67 11 M61.5 20 Q62.5 15 67 13.5 M64 20 Q64.5 17 67 16" stroke="#333" stroke-width="1" fill="none"/><circle cx="66.5" cy="19.5" r="1.2" fill="#222"/>
<path d="M79 12.5 H81.5 L85 9.5 V19.5 L81.5 16.5 H79 Z" fill="none" stroke="#333" stroke-width="1"/><path d="M87 12 Q88.5 14.5 87 17 M89 10.5 Q91.5 14.5 89 18.5" stroke="#333" stroke-width="1" fill="none"/>
<path d="M105 20 Q103 17 106 14 L111 9.5 Q114 8 115 10.5 L112 14 Q110 15 111 17 M107 17 L113 12" stroke="#333" stroke-width="1.3" fill="none"/>
<rect x="131" y="10" width="16" height="9.5" fill="none" stroke="#444" stroke-width="1"/><path d="M133 12.5 H145 M133 14.5 H145 M135 17 H143" stroke="#555" stroke-width="0.8"/>
</svg>
<svg style="position:absolute;left:895px;top:0" width="40" height="29" viewBox="0 0 40 29">
<path d="M5.5 10 Q5.5 8.5 6.7 8.5 Q7.9 8.5 7.9 10 L8 20 Q6.7 21.5 5.4 20 Z M4 12 Q3 15 4.5 18 M9.4 12 Q10.4 15 8.9 18" stroke="#c8ccd0" stroke-width="1" fill="none"/>
<g transform="translate(5 0) rotate(-12 22 14.5)"><rect x="16" y="9" width="11" height="10" rx="2" fill="#e8582a"/><text x="21.5" y="17.6" font-size="10" font-weight="bold" fill="#fff" text-anchor="middle" font-family="Liberation Sans">S</text></g>
</svg>
<div id="clock"><div>11:19</div><div>2022/1/6</div></div>
<svg style="position:absolute;left:994px;top:8px" width="14" height="13" viewBox="0 0 14 13"><path d="M1 1 H13 V9 H8 L6 11.5 L4 9 H1 Z" fill="#111"/><path d="M3 3.5 H11 M3 5.5 H11 M3 7.5 H8" stroke="#ddd" stroke-width="0.8"/></svg>
<div style="position:absolute;left:1020px;top:0;width:1px;height:29px;background:#b8c4cc"></div>
</div>
</body></html>
